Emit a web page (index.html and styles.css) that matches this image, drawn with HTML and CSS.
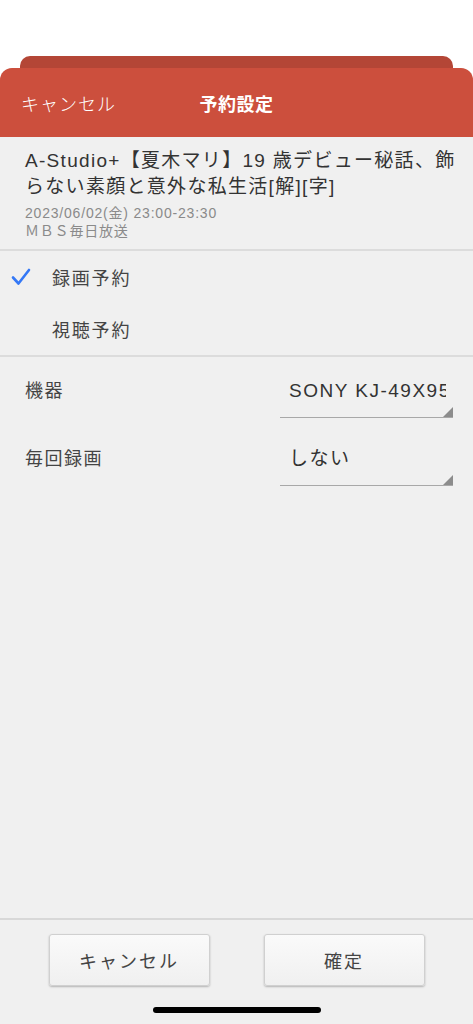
FILE: index.html
```html
<!DOCTYPE html>
<html lang="ja">
<head>
  <meta charset="UTF-8" />
  <meta name="viewport" content="width=device-width, initial-scale=1.0"/>
  <title>予約設定</title>
  <link rel="stylesheet" href="styles.css">
</head>
<body>
  <div class="backdrop">
    <div class="back-card"></div>
  </div>

  <div class="sheet">
    <header class="sheet-header">
      <span class="header-cancel">キャンセル</span>
      <h1 class="header-title">予約設定</h1>
    </header>

    <section class="program">
      <div class="program-title">A-Studio+【夏木マリ】19 歳デビュー秘話、飾らない素顔と意外な私生活[解][字]</div>
      <div class="program-meta">2023/06/02(金) 23:00-23:30</div>
      <div class="program-meta">ＭＢＳ毎日放送</div>
    </section>

    <ul class="choice-list">
      <li class="choice selected">
        <svg class="check" width="20" height="18" viewBox="0 0 20 18">
          <path d="M2 9.5 L7.5 15.5 L18 2" fill="none" stroke="#3478f6" stroke-width="2.6" stroke-linecap="round" stroke-linejoin="round"/>
        </svg>
        <span>録画予約</span>
      </li>
      <li class="choice">
        <span>視聴予約</span>
      </li>
    </ul>

    <div class="settings">
      <div class="setting-row">
        <span class="setting-label">機器</span>
        <div class="select">
          <span class="select-value">SONY KJ-49X9500H</span>
        </div>
      </div>
      <div class="setting-row">
        <span class="setting-label">毎回録画</span>
        <div class="select">
          <span class="select-value">しない</span>
        </div>
      </div>
    </div>

    <footer class="sheet-footer">
      <div class="buttons">
        <button class="btn">キャンセル</button>
        <button class="btn">確定</button>
      </div>
      <div class="home-indicator"></div>
    </footer>
  </div>
</body>
</html>
```

FILE: styles.css
```css
* {
  box-sizing: border-box;
}

html, body {
  margin: 0;
  height: 100%;
}

body {
  background: #fff;
  font-family: "Liberation Sans", "Noto Sans CJK JP", sans-serif;
  color: #333;
  display: flex;
  flex-direction: column;
  height: 1024px;
  overflow: hidden;
}

.backdrop {
  padding: 56px 20px 0;
  height: 68px;
}

.back-card {
  height: 24px;
  background: #b44636;
  border-radius: 10px 10px 0 0;
}

.sheet {
  flex: 1;
  display: flex;
  flex-direction: column;
  background: #f0f0f0;
  border-radius: 12px 12px 0 0;
  overflow: hidden;
}

.sheet-header {
  height: 69px;
  background: #cc4f3d;
  color: #fff;
  display: flex;
  align-items: center;
  padding: 0 21px;
  position: relative;
}

.header-cancel {
  font-size: 18px;
  font-weight: 300;
  letter-spacing: 1px;
}

.header-title {
  position: absolute;
  left: 0;
  right: 0;
  margin: 0;
  text-align: center;
  font-size: 18px;
  font-weight: 700;
  letter-spacing: 0.5px;
  pointer-events: none;
}

.program {
  padding: 11px 10px 9px 25px;
  border-bottom: 2px solid #dcdcdc;
}

.program-title {
  font-size: 19px;
  line-height: 26px;
  letter-spacing: 1.3px;
  color: #333;
  margin-bottom: 4px;
}

.program-meta {
  font-size: 14px;
  line-height: 18px;
  letter-spacing: 0.8px;
  color: #8a8a8a;
}

.choice-list {
  list-style: none;
  margin: 0;
  padding: 0;
  border-bottom: 2px solid #dcdcdc;
}

.choice {
  height: 52px;
  display: flex;
  align-items: center;
  padding-left: 52px;
  position: relative;
  font-size: 18px;
  color: #444;
  letter-spacing: 1.8px;
}

.check {
  position: absolute;
  left: 11px;
  top: 17px;
}

.settings {
  padding: 11px 20px 0 25px;
}

.setting-row {
  display: flex;
  justify-content: space-between;
  align-items: flex-start;
  height: 68px;
}

.setting-label {
  font-size: 18px;
  line-height: 24px;
  color: #444;
  padding-top: 11px;
  letter-spacing: 1.5px;
}

.select {
  width: 173px;
  height: 50px;
  border-bottom: 1.5px solid #a8a8a8;
  position: relative;
  padding: 11px 0 0 9px;
  overflow: hidden;
}

.select::after {
  content: "";
  position: absolute;
  right: 0;
  bottom: 0;
  border-style: solid;
  border-width: 0 0 10px 10px;
  border-color: transparent transparent #8c8c8c transparent;
}

.select-value {
  display: block;
  white-space: nowrap;
  overflow: hidden;
  width: 157px;
  font-size: 19px;
  line-height: 24px;
  letter-spacing: 1.5px;
  color: #333;
}

.sheet-footer {
  margin-top: auto;
  height: 106px;
  border-top: 2px solid #d8d8d8;
  display: flex;
  flex-direction: column;
  align-items: center;
}

.buttons {
  display: flex;
  gap: 54px;
  padding-top: 14px;
}

.btn {
  width: 161px;
  height: 52px;
  border: 1px solid #d0d0d0;
  border-radius: 3px;
  background: linear-gradient(#fafafa, #f0f0f0);
  box-shadow: 0 1px 2px rgba(0, 0, 0, 0.25);
  font-family: inherit;
  font-size: 18px;
  color: #444;
  letter-spacing: 2px;
}

.home-indicator {
  margin-top: 21px;
  width: 168px;
  height: 6px;
  border-radius: 3px;
  background: #000;
}
```
